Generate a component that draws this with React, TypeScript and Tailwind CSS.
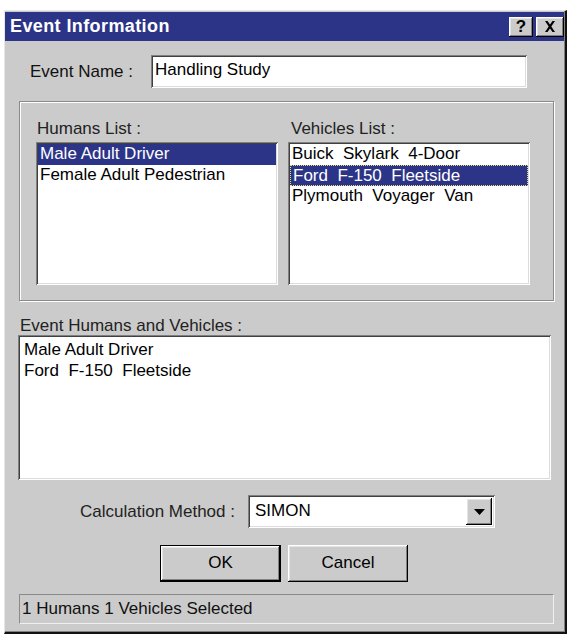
import React, { useState } from 'react';

const humans = ['Male Adult Driver', 'Female Adult Pedestrian'];
const vehicles = ['Buick  Skylark  4-Door', 'Ford  F-150  Fleetside', 'Plymouth  Voyager  Van'];

// classic 3d borders
const sunken =
  'shadow-[inset_1px_1px_#808080,inset_-1px_-1px_#ffffff,inset_2px_2px_#404040,inset_-2px_-2px_#dcdcdc]';
const raised =
  'shadow-[inset_-1px_-1px_#000000,inset_1px_1px_#ffffff,inset_-2px_-2px_#808080,inset_2px_2px_#e4e4e4]';

const ListBox: React.FC<{
  items: string[];
  selected: number;
  focused?: boolean;
  onSelect: (i: number) => void;
  className: string;
}> = ({ items, selected, focused, onSelect, className }) => (
  <div className={`bg-white pt-[2px] px-[2px] ${sunken} ${className}`}>
    {items.map((item, i) => (
      <div
        key={item}
        onClick={() => onSelect(i)}
        className={`h-[21px] leading-[20px] pl-[2px] whitespace-pre cursor-default ${
          i === selected ? 'bg-[#2c3488] text-white' : 'text-black'
        } ${i === selected && focused ? 'border border-dotted border-[#e8e070] pl-[1px] leading-[18px]' : ''}`}
      >
        {item}
      </div>
    ))}
  </div>
);

const App: React.FC = () => {
  const [name, setName] = useState('Handling Study');
  const [human, setHuman] = useState(0);
  const [vehicle, setVehicle] = useState(1);

  return (
    <div className="w-[575px] h-[638px] bg-white pt-[10px] pl-[4px] font-['Liberation_Sans',Arial,sans-serif] text-[17px] text-black">
      <div className="w-[563px] h-[624px] bg-[#cbcbcb] border-l border-t border-l-[#e6e6e6] border-t-[#e6e6e6] border-r-2 border-b-2 border-r-[#111] border-b-[#111] pt-[1px] shadow-[inset_-1px_-1px_#808080]">
        {/* title bar */}
        <div className="h-[29px] mr-[1px] bg-[#2c3488] flex items-center justify-between pl-[5px] pr-0">
          <span className="text-white font-bold text-[18px] tracking-[0.4px]">Event Information</span>
          <div className="flex gap-[3px]">
            <button className={`w-[24px] h-[20px] bg-[#cbcbcb] ${raised} flex items-center justify-center font-bold text-[17px] leading-none`}>
              ?
            </button>
            <button className={`w-[28px] h-[20px] bg-[#cbcbcb] ${raised} flex items-center justify-center`}>
              <svg width="12" height="11" viewBox="0 0 12 11">
                <path d="M1 0h2.5L6 3.6 8.5 0H11L7.3 5.5 11 11H8.5L6 7.4 3.5 11H1l3.7-5.5z" fill="#000" />
              </svg>
            </button>
          </div>
        </div>

        <div className="pl-[14px] pr-[11px] flex flex-col">
          {/* event name */}
          <div className="flex items-center mt-[14px]">
            <label className="w-[118px] pl-[11px] text-[#111]">Event Name :</label>
            <input
              value={name}
              onChange={(e) => setName(e.target.value)}
              className={`ml-[14px] w-[376px] h-[33px] bg-white px-[4px] pb-[4px] outline-none ${sunken}`}
            />
          </div>

          {/* humans / vehicles group */}
          <div className="mt-[13px] h-[200px] border border-[#8a8a8a] shadow-[inset_1px_1px_#ffffff,1px_1px_#ffffff] pl-[16px] pt-[14px] flex gap-[10px]">
            <div className="flex flex-col">
              <span className="h-[26px] pl-[1px] text-[#222]">Humans List :</span>
              <ListBox items={humans} selected={human} onSelect={setHuman} className="w-[242px] h-[143px]" />
            </div>
            <div className="flex flex-col">
              <span className="h-[26px] pl-[3px] text-[#222]">Vehicles List :</span>
              <ListBox
                items={vehicles}
                selected={vehicle}
                focused
                onSelect={setVehicle}
                className="w-[242px] h-[143px]"
              />
            </div>
          </div>

          {/* event list */}
          <span className="mt-[12px] h-[22px] pl-[1px] text-[#222]">Event Humans and Vehicles :</span>
          <div className={`-ml-[1px] w-[533px] h-[145px] bg-white pt-[4px] pl-[6px] leading-[21px] ${sunken}`}>
            <div>{humans[human]}</div>
            <div className="whitespace-pre">{vehicles[vehicle]}</div>
          </div>

          {/* calculation method */}
          <div className="flex items-center mt-[15px]">
            <span className="w-[219px] pl-[61px] text-[#222]">Calculation Method :</span>
            <div className={`ml-[10px] w-[247px] h-[33px] bg-white flex items-center justify-between pl-[7px] pr-[3px] ${sunken}`}>
              <span className="pb-[1px]">SIMON</span>
              <div className={`w-[26px] h-[27px] bg-[#cbcbcb] ${raised} flex items-center justify-center`}>
                <svg width="11" height="6" viewBox="0 0 11 6">
                  <path d="M0 0h11L5.5 6z" fill="#000" />
                </svg>
              </div>
            </div>
          </div>

          {/* buttons */}
          <div className="flex mt-[17px] pl-[141px] gap-[7px]">
            <button className={`w-[121px] h-[37px] bg-[#cbcbcb] border border-black ${raised} pb-[2px]`}>OK</button>
            <button className={`w-[120px] h-[37px] bg-[#cbcbcb] ${raised} pb-[2px]`}>Cancel</button>
          </div>

          {/* status bar */}
          <div className="mt-[12px] h-[30px] border border-t-[#8a8a8a] border-l-[#8a8a8a] border-b-[#f0f0f0] border-r-[#f0f0f0] flex items-center pl-[2px] text-[#111]">
            1 Humans 1 Vehicles Selected
          </div>
        </div>
      </div>
    </div>
  );
};

export default App;
